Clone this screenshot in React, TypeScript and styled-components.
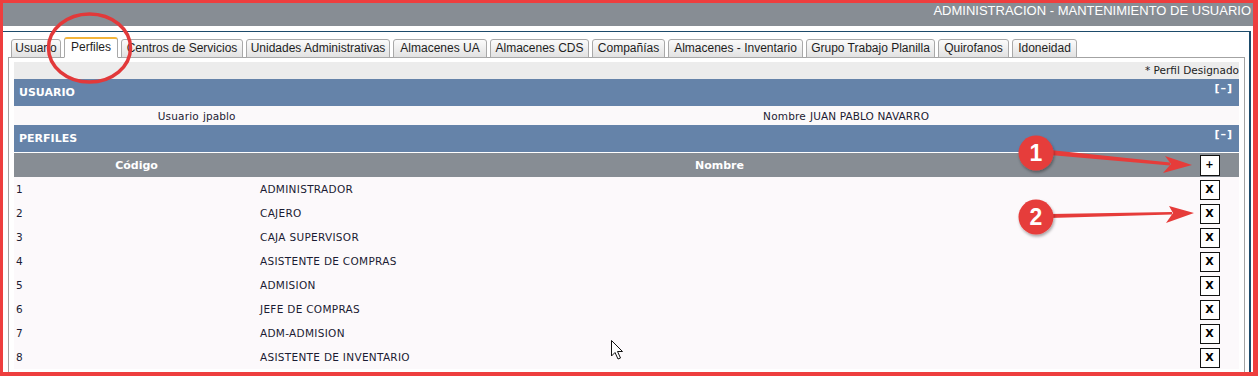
import React from "react";
import styled, { createGlobalStyle } from "styled-components";

const GlobalStyle = createGlobalStyle`
  html, body {
    margin: 0;
    padding: 0;
    background: #ffffff;
  }
`;

const Frame = styled.div`
  position: relative;
  width: 1258px;
  height: 376px;
  box-sizing: border-box;
  border-style: solid;
  border-color: #ee3e3e;
  border-width: 3px 5px 4px 3px;
  overflow: hidden;
  background: #ffffff;
`;

const TitleBar = styled.div`
  height: 23px;
  background: #878d94;
  color: #ffffff;
  font-family: "Liberation Sans", Arial, sans-serif;
  font-size: 13px;
  line-height: 16px;
  text-align: right;
  padding-right: 2px;
  box-sizing: border-box;
`;

const Shell = styled.div`
  margin: 5px 2px 0 0;
  border-top: 1px solid #1d4b6b;
  border-right: 2px solid #1d4b6b;
  padding: 5px 4px 0 5px;
`;

const TabList = styled.div`
  display: flex;
  align-items: flex-end;
  gap: 3px;
  height: 21px;
  padding-left: 3px;
  margin-bottom: -1px;
  position: relative;
  z-index: 1;
`;

const Tab = styled.div<{ $active?: boolean; $width: number }>`
  box-sizing: border-box;
  width: ${({ $width }) => $width}px;
  height: ${({ $active }) => ($active ? "21px" : "19px")};
  border: 1px solid #a9a9a9;
  border-bottom: ${({ $active }) => ($active ? "1px solid #ffffff" : "1px solid #a9a9a9")};
  border-top: ${({ $active }) => ($active ? "2px solid #f2b43a" : "1px solid #a9a9a9")};
  border-radius: 3px 3px 0 0;
  background: ${({ $active }) =>
    $active ? "#ffffff" : "linear-gradient(#fbfbfb, #e2e2e2)"};
  font-family: "Liberation Sans", Arial, sans-serif;
  font-size: 12px;
  line-height: ${({ $active }) => ($active ? "17px" : "16px")};
  color: #1e1e1e;
  text-align: center;
  white-space: nowrap;
`;

const Panel = styled.div`
  border: 1px solid #a3a3a3;
  padding: 4px 5px 0 5px;
  background: #ffffff;
  height: 330px;
  font-family: "DejaVu Sans", Verdana, sans-serif;
  font-size: 10.5px;
  letter-spacing: 0.3px;
  color: #1b1b33;
`;

const LegendBar = styled.div`
  height: 17px;
  line-height: 17px;
  background: #ececec;
  text-align: right;
  letter-spacing: 0;
  color: #222222;
`;

const SectionHeader = styled.div`
  display: flex;
  justify-content: space-between;
  height: 27px;
  background: #6583a9;
  color: #ffffff;
  font-weight: bold;
  font-size: 11px;
  letter-spacing: 0;
`;

const SectionTitle = styled.span`
  align-self: center;
  padding-left: 5px;
`;

const Collapse = styled.span`
  padding: 3px 6px 0 0;
  font-size: 11px;
  line-height: 14px;
  letter-spacing: 1px;
`;

const UserRow = styled.div`
  display: grid;
  grid-template-columns: 185px 400px 207px 1fr;
  height: 19px;
  line-height: 20px;
  background: #fbf9fa;
`;

const Label = styled.span`
  text-align: right;
  letter-spacing: 0.2px;
`;

const Value = styled.span`
  padding-left: 4px;
  letter-spacing: 0.1px;
`;

const Grid = styled.div`
  display: grid;
  grid-template-columns: 245px 921px 1fr;
  align-items: center;
`;

const HeadRow = styled(Grid)`
  height: 24px;
  margin-top: 1px;
  background: #878d94;
  color: #ffffff;
  font-weight: bold;
  font-size: 11px;
  letter-spacing: 0;
`;

const HeadCell = styled.span`
  text-align: center;
`;

const DataRow = styled(Grid)`
  height: 24px;
  line-height: 25px;
  background: #fcf9fb;
`;

const Cell = styled.span<{ $pad?: number }>`
  padding-left: ${({ $pad }) => $pad ?? 0}px;
  white-space: nowrap;
`;

const ActionCell = styled.span`
  display: flex;
  justify-content: center;
`;

const SquareButton = styled.button<{ $tall?: boolean }>`
  box-sizing: border-box;
  width: 20px;
  height: ${({ $tall }) => ($tall ? "21px" : "20px")};
  padding: 0;
  border: 1px solid #111111;
  background: #ffffff;
  color: #000000;
  font-family: "DejaVu Sans", Verdana, sans-serif;
  font-weight: bold;
  font-size: ${({ $tall }) => ($tall ? "10px" : "11px")};
  line-height: 18px;
  cursor: pointer;
`;

const Overlay = styled.svg`
  position: absolute;
  top: -3px;
  left: -3px;
  pointer-events: none;
  z-index: 5;
`;

const tabs: [string, number][] = [
  ["Usuario", 50],
  ["Perfiles", 54],
  ["Centros de Servicios", 122],
  ["Unidades Administrativas", 144],
  ["Almacenes UA", 94],
  ["Almacenes CDS", 99],
  ["Compañías", 73],
  ["Almacenes - Inventario", 135],
  ["Grupo Trabajo Planilla", 129],
  ["Quirofanos", 71],
  ["Idoneidad", 65],
];

const perfiles = [
  "ADMINISTRADOR",
  "CAJERO",
  "CAJA SUPERVISOR",
  "ASISTENTE DE COMPRAS",
  "ADMISION",
  "JEFE DE COMPRAS",
  "ADM-ADMISION",
  "ASISTENTE DE INVENTARIO",
];

function Marker(props: { cx: number; cy: number; n: string }) {
  const { cx, cy, n } = props;
  return (
    <g>
      <circle cx={cx} cy={cy} r={17.5} fill="#e63c3a" filter="url(#shadow)" />
      <text
        x={cx}
        y={cy + 8}
        textAnchor="middle"
        fill="#ffffff"
        fontFamily="Liberation Sans, Arial, sans-serif"
        fontWeight="bold"
        fontSize="23"
      >
        {n}
      </text>
    </g>
  );
}

function Annotations() {
  return (
    <Overlay width={1258} height={376} viewBox="0 0 1258 376">
      <defs>
        <filter id="shadow" x="-50%" y="-50%" width="200%" height="200%">
          <feDropShadow dx="1" dy="2" stdDeviation="1.5" floodColor="#000" floodOpacity="0.35" />
        </filter>
      </defs>
      <ellipse
        cx={89.5}
        cy={48}
        rx={41}
        ry={34}
        fill="none"
        stroke="#e2393a"
        strokeWidth={3.5}
      />
      <path d="M1050 150 L1170 162.5 L1170 165.5 L1050 155 Z" fill="#e63c3a" />
      <path d="M1192 165 L1165 156 L1171 164 L1163 173 Z" fill="#e63c3a" />
      <path d="M1050 214 L1172 212 L1172 214.5 L1050 218 Z" fill="#e63c3a" />
      <path d="M1194 213 L1169 206 L1173 213 L1166 223 Z" fill="#e63c3a" />
      <Marker cx={1036} cy={153} n="1" />
      <Marker cx={1036} cy={217} n="2" />
      <path
        d="M611.5 340.5 L611.5 356 L615 352.5 L618 359 L620.5 358 L617.5 351.5 L622.5 351.5 Z"
        fill="#ffffff"
        stroke="#111111"
        strokeWidth={1}
        strokeLinejoin="round"
      />
    </Overlay>
  );
}

export default function App(): JSX.Element {
  return (
    <Frame>
      <GlobalStyle />
      <TitleBar>ADMINISTRACION - MANTENIMIENTO DE USUARIO</TitleBar>
      <Shell>
        <TabList>
          {tabs.map(([t, w]) => (
            <Tab key={t} $width={w} $active={t === "Perfiles"}>
              {t}
            </Tab>
          ))}
        </TabList>
        <Panel>
          <LegendBar>* Perfil Designado</LegendBar>
          <SectionHeader>
            <SectionTitle>USUARIO</SectionTitle>
            <Collapse>[–]</Collapse>
          </SectionHeader>
          <UserRow>
            <Label>Usuario</Label>
            <Value>jpablo</Value>
            <Label>Nombre</Label>
            <Value>JUAN PABLO NAVARRO</Value>
          </UserRow>
          <SectionHeader>
            <SectionTitle>PERFILES</SectionTitle>
            <Collapse>[–]</Collapse>
          </SectionHeader>
          <HeadRow>
            <HeadCell>Código</HeadCell>
            <HeadCell>Nombre</HeadCell>
            <ActionCell>
              <SquareButton $tall>+</SquareButton>
            </ActionCell>
          </HeadRow>
          {perfiles.map((p, i) => (
            <DataRow key={p}>
              <Cell $pad={2}>{i + 1}</Cell>
              <Cell $pad={1}>{p}</Cell>
              <ActionCell>
                <SquareButton>X</SquareButton>
              </ActionCell>
            </DataRow>
          ))}
        </Panel>
      </Shell>
      <Annotations />
    </Frame>
  );
}
